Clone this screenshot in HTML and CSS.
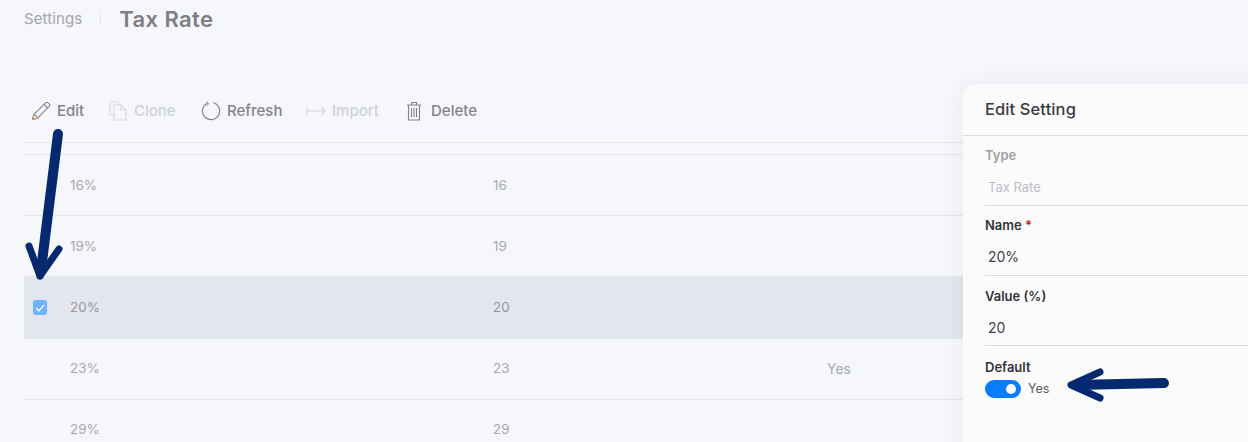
FILE: index.html
```html
<!DOCTYPE html>
<html lang="en">
<head>
    <meta charset="UTF-8">
    <meta name="viewport" content="width=device-width, initial-scale=1.0">
    <title>Tax Rate</title>
    <link rel="stylesheet" href="styles.css">
</head>
<body>
    <div class="app">
        <header class="page-head">
            <span class="crumb">Settings</span>
            <span class="head-sep"></span>
            <h1 class="title">Tax Rate</h1>
        </header>

        <div class="toolbar">
            <button class="tool tool-edit">
                <svg width="20" height="20" viewBox="0 0 20 20" fill="none" stroke="#8a8488" stroke-width="1.1" stroke-linejoin="round"><path d="M1.500 18.500l1.600-5.400L14.800 1.600a1.400 1.400 0 0 1 2 0l1.600 1.600a1.400 1.400 0 0 1 0 2L6.900 16.900z"/><path d="M3.100 13.100l3.800 3.800M13 3.400l3.600 3.600"/><path d="M1.500 18.500l1.600-5.400 3.800 3.800z" stroke="#c29a78"/></svg>
                Edit
            </button>
            <button class="tool tool-clone off">
                <svg width="18" height="20" viewBox="0 0 18 20" fill="none" stroke="#d5d7de" stroke-width="1.1"><path d="M1 1h8l0 3M1 1v13h4"/><path d="M5 4h7l5 5v10H5z"/><path d="M12 4v5h5"/></svg>
                Clone
            </button>
            <button class="tool tool-refresh">
                <svg width="20" height="20" viewBox="0 0 20 20" fill="none" stroke="#85828a" stroke-width="1.2"><path d="M6.500 2.200A8.600 8.600 0 1 0 12.500 1.800"/><path d="M5.200 0.600l2.400 2-1.600 2.200" stroke-width="1"/></svg>
                Refresh
            </button>
            <button class="tool tool-import off">
                <svg width="20" height="12" viewBox="0 0 20 12" fill="none" stroke="#d5d7de" stroke-width="1.1"><path d="M1 2v8M1 6h18M15 2l4 4-4 4"/></svg>
                Import
            </button>
            <button class="tool tool-delete">
                <svg width="16" height="20" viewBox="0 0 16 20" fill="none" stroke="#85828a" stroke-width="1.1"><path d="M1 4h14M5.500 4V1.500h5V4M2.500 4v15h11V4M5.500 7v9M8 7v9M10.500 7v9"/></svg>
                Delete
            </button>
        </div>

        <div class="table">
            <div class="row"><span class="cell-check"></span><span>16%</span><span>16</span><span></span></div>
            <div class="row"><span class="cell-check"></span><span>19%</span><span>19</span><span></span></div>
            <div class="row selected">
                <span class="cell-check">
                    <span class="checkbox">
                        <svg width="10" height="8" viewBox="0 0 10 8" fill="none" stroke="#fff" stroke-width="1.3"><path d="M1 4l2.800 2.700L9 1"/></svg>
                    </span>
                </span>
                <span>20%</span><span>20</span><span></span>
            </div>
            <div class="row"><span class="cell-check"></span><span>23%</span><span>23</span><span class="cell-default">Yes</span></div>
            <div class="row row-last"><span class="cell-check"></span><span>29%</span><span>29</span><span></span></div>
        </div>

        <aside class="panel">
            <div class="panel-head">Edit Setting</div>
            <div class="panel-body">
                <div class="field field-type">
                    <label class="field-label">Type</label>
                    <div class="field-value">Tax Rate</div>
                </div>
                <div class="field">
                    <label class="field-label">Name <span class="req">*</span></label>
                    <div class="field-value">20%</div>
                </div>
                <div class="field field-num">
                    <label class="field-label">Value (%)</label>
                    <div class="field-value">20</div>
                </div>
                <div class="field-switch">
                    <label class="field-label">Default</label>
                    <div class="switch-line">
                        <span class="switch"><span class="knob"></span></span>
                        <span class="switch-text">Yes</span>
                    </div>
                </div>
            </div>
        </aside>

        <!-- annotation arrows -->
        <svg class="arrows" width="1248" height="442" viewBox="0 0 1248 442" fill="none" stroke="#04296f" stroke-linecap="round" stroke-linejoin="round">
            <path d="M58 134L41 270" stroke-width="10"/>
            <path d="M29 246L40 276L59 249" stroke-width="7"/>
            <path d="M40 262L40 276" stroke-width="7"/>
            <path d="M1164 383L1076 385" stroke-width="10"/>
            <path d="M1100 372L1071 385L1100 398" stroke-width="7"/>
        </svg>
    </div>
</body>
</html>
```

FILE: styles.css
```css
* {
    margin: 0;
    padding: 0;
    box-sizing: border-box;
}
html, body {
    height: 100%;
    width: 100%;
    font-family: Inter, "Noto Sans", sans-serif;
    background: #f5f7fb;
}
.app {
    height: 442px;
    width: 1248px;
    position: relative;
    overflow: hidden;
    padding-left: 24px;
}
.page-head {
    height: 37px;
    display: flex;
    align-items: center;
}
.crumb {
    font-size: 15px;
    letter-spacing: 0.1px;
    color: #a3a5ad;
}
.head-sep {
    width: 1px;
    height: 12px;
    background: #e6e8ee;
    margin: 0 18px 0 18px;
}
.title {
    font-size: 22px;
    font-weight: 600;
    letter-spacing: 0.4px;
    color: #7f7d85;
}
.toolbar {
    margin-top: 47px;
    height: 59px;
    display: flex;
    align-items: center;
    padding-left: 7px;
    padding-bottom: 5px;
    border-bottom: 1px solid #e4e6ed;
}
.tool {
    display: flex;
    align-items: center;
    gap: 6px;
    border: none;
    background: none;
    font-family: inherit;
    font-size: 15px;
    font-weight: 500;
    color: #85828a;
}
.tool.off {
    color: #cfd1d9;
}
.tool-edit { width: 78px; gap: 6px; }
.tool-clone { width: 92px; gap: 7px; }
.tool-refresh { width: 105px; gap: 6px; }
.tool-import { width: 100px; gap: 6px; }
.tool-delete { gap: 9px; }
.table {
    margin-top: 11px;
    width: 960px;
    font-size: 13.500px;
    color: #a9a9ae;
}
.row {
    height: 61px;
    display: grid;
    grid-template-columns: 46px 423px 334px 1fr;
    align-items: center;
    border-top: 1px solid #e4e6ed;
}
.row.selected {
    height: 63px;
    padding-bottom: 2px;
    background: #e3e6ee;
    border-top: none;
    color: #98979c;
}
.row.selected + .row {
    height: 60px;
    padding-bottom: 2px;
    border-top: none;
}
.row-last {
    padding-bottom: 3px;
}
.cell-default {
    font-size: 14px;
}
.cell-check {
    display: flex;
    padding-left: 9px;
}
.checkbox {
    width: 14px;
    height: 15px;
    margin-top: 2px;
    border-radius: 3px;
    background: #6cb4ff;
    display: flex;
    align-items: center;
    justify-content: center;
}
.panel {
    position: absolute;
    left: 963px;
    top: 84px;
    width: 300px;
    height: 380px;
    background: #fbfbfc;
    border-radius: 14px 0 0 0;
    box-shadow: 0 0 20px rgba(60, 60, 80, 0.07);
}
.panel-head {
    height: 52px;
    padding: 0 22px 2px;
    display: flex;
    align-items: center;
    border-bottom: 1px solid #d9d9e3;
    font-size: 16.500px;
    font-weight: 500;
    letter-spacing: 0.1px;
    color: #3a3a3e;
}
.panel-body {
    padding: 0 0 0 22px;
}
.field {
    height: 70px;
    padding-top: 11px;
    border-bottom: 1px solid #d9d9e3;
}
.field-num {
    padding-top: 12px;
}
.field-label {
    display: block;
    font-size: 13px;
    line-height: 16px;
    font-weight: 600;
    color: #333337;
}
.field-type .field-label {
    color: #a0a0a5;
}
.field-value {
    margin-top: 15px;
    padding-left: 3px;
    font-size: 14px;
    line-height: 17px;
    color: #444448;
}
.field-type .field-value {
    margin-top: 16px;
    font-size: 13px;
    color: #bdbdc5;
}
.req {
    color: #b3262e;
}
.field-switch {
    padding-top: 13px;
}
.switch-line {
    display: flex;
    align-items: center;
    gap: 7px;
    margin-top: 5px;
}
.switch {
    width: 36px;
    height: 18px;
    border-radius: 9px;
    background: #0a7cff;
    display: flex;
    align-items: center;
    justify-content: flex-end;
    padding-right: 5px;
}
.knob {
    width: 10px;
    height: 10px;
    border-radius: 50%;
    background: #fff;
}
.switch-text {
    margin-bottom: 2px;
    font-size: 12.500px;
    color: #5a5a5e;
}
.arrows {
    position: absolute;
    left: 0;
    top: 0;
    pointer-events: none;
}
```
